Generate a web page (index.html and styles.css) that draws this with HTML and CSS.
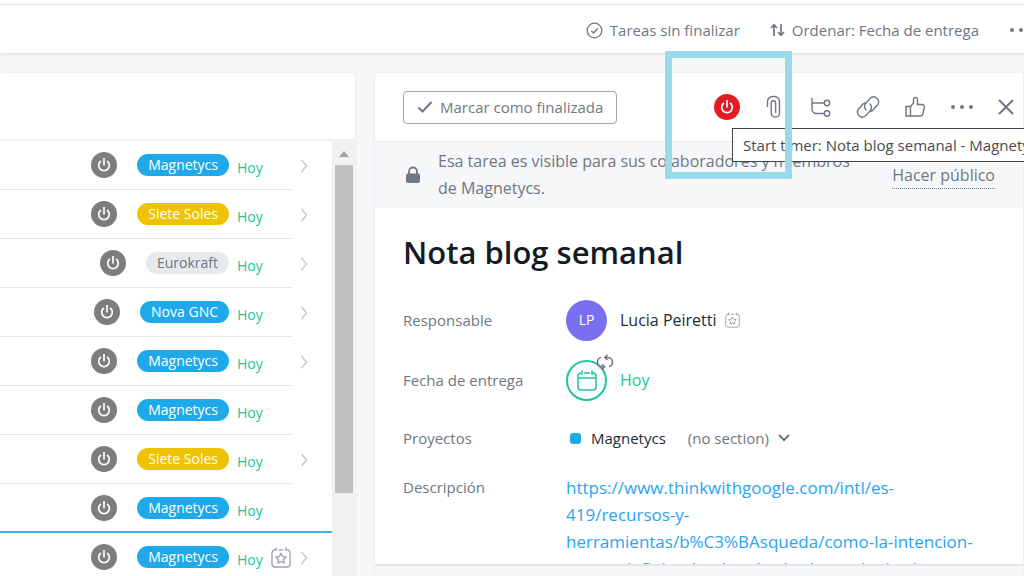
FILE: index.html
```html
<!DOCTYPE html>
<html lang="es">
<head>
<meta charset="utf-8">
<title>Nota blog semanal</title>
<link rel="stylesheet" href="styles.css">
</head>
<body>
<svg class="sprite" aria-hidden="true">
  <symbol id="power" viewBox="0 0 26 26"><path d="M10 9a5.300 5.300 0 1 0 6 0M13 6v7.500" fill="none" stroke="currentColor" stroke-width="1.700"/></symbol>
  <symbol id="chevron" viewBox="0 0 8 14"><path d="M1.500 1l5 6-5 6" fill="none" stroke="currentColor" stroke-width="1.500"/></symbol>
  <symbol id="calstar" viewBox="0 0 20 21"><g fill="none" stroke="currentColor" stroke-width="1.300"><path d="M5 2.800H4a3 3 0 0 0-3 3V17a3 3 0 0 0 3 3h12a3 3 0 0 0 3-3V5.800a3 3 0 0 0-3-3h-1M7.500 2.800h5M5 0.500v3.500M15 0.500v3.500"/><path d="M10 6.500l1.600 3 3.400.6-2.400 2.400.5 3.400L10 14.400l-3.100 1.500.5-3.400L5 10.100l3.400-.6z"/></g></symbol>
</svg>
<div class="app">
  <header class="toolbar">
    <button class="tool"><svg width="17" height="17" viewBox="0 0 17 17"><g fill="none" stroke="currentColor" stroke-width="1.300"><circle cx="8.500" cy="8.500" r="7.300"/><path d="M5.200 8.600l2.400 2.400 4.300-4.700"/></g></svg>Tareas sin finalizar</button>
    <button class="tool"><svg width="15" height="14" viewBox="0 0 15 14"><g fill="none" stroke="currentColor" stroke-width="1.700"><path d="M4 13V2M1 5l3-3.300L7 5M11 1v11M8 9l3 3.300L14 9"/></g></svg>Ordenar: Fecha de entrega</button>
    <button class="tool" aria-label="Más"><svg width="24" height="6" viewBox="0 0 24 6" fill="currentColor"><circle cx="3" cy="3" r="2"/><circle cx="12" cy="3" r="2"/><circle cx="21" cy="3" r="2"/></svg></button>
  </header>
  <main class="board">
    <section class="panel list">
      <div class="list-head"></div>
      <div class="list-body">
        <ul class="rows">
          <li class="row"><div class="row-main"><button class="power" aria-label="Iniciar"><svg><use href="#power"/></svg></button><span class="pill">Magnetycs</span><span class="date">Hoy</span><span class="slot"></span></div><button class="go" aria-label="Abrir"><svg><use href="#chevron"/></svg></button></li>
          <li class="row"><div class="row-main"><button class="power" aria-label="Iniciar"><svg><use href="#power"/></svg></button><span class="pill pill-yellow">Siete Soles</span><span class="date">Hoy</span><span class="slot"></span></div><button class="go" aria-label="Abrir"><svg><use href="#chevron"/></svg></button></li>
          <li class="row"><div class="row-main"><button class="power" aria-label="Iniciar"><svg><use href="#power"/></svg></button><span class="pill pill-gray">Eurokraft</span><span class="date">Hoy</span><span class="slot"></span></div><button class="go" aria-label="Abrir"><svg><use href="#chevron"/></svg></button></li>
          <li class="row"><div class="row-main"><button class="power" aria-label="Iniciar"><svg><use href="#power"/></svg></button><span class="pill">Nova GNC</span><span class="date">Hoy</span><span class="slot"></span></div><button class="go" aria-label="Abrir"><svg><use href="#chevron"/></svg></button></li>
          <li class="row"><div class="row-main"><button class="power" aria-label="Iniciar"><svg><use href="#power"/></svg></button><span class="pill">Magnetycs</span><span class="date">Hoy</span><span class="slot"></span></div><button class="go" aria-label="Abrir"><svg><use href="#chevron"/></svg></button></li>
          <li class="row"><div class="row-main"><button class="power" aria-label="Iniciar"><svg><use href="#power"/></svg></button><span class="pill">Magnetycs</span><span class="date">Hoy</span><span class="slot"></span></div></li>
          <li class="row"><div class="row-main"><button class="power" aria-label="Iniciar"><svg><use href="#power"/></svg></button><span class="pill pill-yellow">Siete Soles</span><span class="date">Hoy</span><span class="slot"></span></div><button class="go" aria-label="Abrir"><svg><use href="#chevron"/></svg></button></li>
          <li class="row row-marked"><div class="row-main"><button class="power" aria-label="Iniciar"><svg><use href="#power"/></svg></button><span class="pill">Magnetycs</span><span class="date">Hoy</span><span class="slot"></span></div></li>
          <li class="row"><div class="row-main"><button class="power" aria-label="Iniciar"><svg><use href="#power"/></svg></button><span class="pill">Magnetycs</span><span class="date">Hoy</span><span class="slot"><svg class="calstar"><use href="#calstar"/></svg></span></div><button class="go" aria-label="Abrir"><svg><use href="#chevron"/></svg></button></li>
        </ul>
        <div class="scrollbar"><span class="arrow"></span><span class="thumb"></span></div>
      </div>
    </section>
    <section class="panel detail">
      <div class="detail-head">
        <button class="complete"><svg width="16" height="12" viewBox="0 0 16 12"><path d="M1.500 6.500l4 4L14.500 1" fill="none" stroke="currentColor" stroke-width="2"/></svg>Marcar como finalizada</button>
        <div class="actions">
          <div class="timer">
            <button class="power power-on" aria-label="Start timer" aria-describedby="tip"><svg><use href="#power"/></svg></button>
            <div class="tooltip" id="tip" role="tooltip">Start timer: Nota blog semanal - Magnetycs</div>
            <div class="highlight"></div>
          </div>
          <button class="action" aria-label="Adjuntar"><svg width="16" height="24" viewBox="0 0 16 24"><path d="M1.500 12V6.500a5 5 0 0 1 5-5h2a5 5 0 0 1 5 5V18a4 4 0 0 1-8.300 0V8a2.200 2.200 0 0 1 4.400 0v10"/></svg></button>
          <button class="action" aria-label="Subtareas"><svg width="22" height="22" viewBox="0 0 22 22"><path d="M2 2v11a4.500 4.500 0 0 0 4.500 4.500H14M2 7h12"/><circle cx="17" cy="7" r="2.700"/><circle cx="17" cy="17.500" r="2.700"/></svg></button>
          <button class="action" aria-label="Copiar enlace"><svg width="24" height="24" viewBox="0 0 24 24"><path d="M10.500 15.500a5 5 0 0 1-.5-7.500l4.500-5a5 5 0 0 1 7 7l-4.500 5a4.500 4.500 0 0 1-3.500 1.300M13.500 8.500a5 5 0 0 1 .5 7.500l-4.500 5a5 5 0 0 1-7-7L7 9a4.500 4.500 0 0 1 3.500-1.300"/></svg></button>
          <button class="action" aria-label="Me gusta"><svg width="22" height="22" viewBox="0 0 22 22"><path d="M2 10.500h4.500V20H2zM6.500 10.500L9.500 7V3.500a2 2 0 0 1 4 0V8.500h4.500a2.300 2.300 0 0 1 2.300 2.800l-1.500 6.900a2.300 2.300 0 0 1-2.300 1.800H6.500"/></svg></button>
          <button class="action" aria-label="Más acciones"><svg width="24" height="6" viewBox="0 0 24 6"><g class="solid"><circle cx="3" cy="3" r="2"/><circle cx="12" cy="3" r="2"/><circle cx="21" cy="3" r="2"/></g></svg></button>
          <button class="action action-close" aria-label="Cerrar"><svg width="18" height="18" viewBox="0 0 18 18"><path d="M2 2l14 14M16 2L2 16" stroke-width="2"/></svg></button>
        </div>
      </div>
      <div class="banner">
        <svg class="lock" width="16" height="18" viewBox="0 0 16 18"><path d="M4 8V5.500a4 4 0 0 1 8 0V8" fill="none" stroke="currentColor" stroke-width="1.800"/><rect x="1" y="7.500" width="14" height="9.500" rx="2" fill="currentColor"/></svg>
        <p class="notice">Esa tarea es visible para sus colaboradores y miembros de Magnetycs.</p>
        <a class="public" href="#">Hacer público</a>
      </div>
      <div class="detail-body">
        <h1 class="title">Nota blog semanal</h1>
        <dl class="fields">
          <dt>Responsable</dt>
          <dd><span class="avatar">LP</span><span class="name">Lucia Peiretti</span><svg class="calstar-small"><use href="#calstar"/></svg></dd>
          <dt>Fecha de entrega</dt>
          <dd><span class="due-icon"><svg width="20" height="21" viewBox="0 0 20 21"><path d="M3.500 3H4a3 3 0 0 0-3 3v11a3 3 0 0 0 3 3h12a3 3 0 0 0 3-3V6a3 3 0 0 0-3-3h-.5M7 3h6M5 0.500V5M15 .500V5M1 8h18" fill="none" stroke="currentColor" stroke-width="1.500"/></svg><svg class="repeat" width="18" height="16" viewBox="0 0 18 16"><path d="M7 12.800H6A4.800 4.800 0 0 1 5 3.400M10 3.400h2a4.800 4.800 0 0 1 1 9.400M11.500 .8L8.800 3.400l2.700 2.600M6 10.200l2.700 2.600L6 15.400" fill="none" stroke="currentColor" stroke-width="1.500"/></svg></span><span class="due">Hoy</span></dd>
          <dt>Proyectos</dt>
          <dd><span class="dot"></span><span class="project">Magnetycs</span><button class="section">(no section)<svg width="12" height="8" viewBox="0 0 12 8"><path d="M1 1l5 5 5-5" fill="none" stroke="currentColor" stroke-width="2"/></svg></button></dd>
          <dt class="text">Descripción</dt>
          <dd class="text"><a class="url" href="#">https://www.thinkwithgoogle.com/intl/es-419/recursos-y-herramientas/b%C3%BAsqueda/como-la-intencion-esta-redefiniendo-el-embudo-de-marketing/</a></dd>
        </dl>
      </div>
      <footer class="detail-foot"></footer>
    </section>
  </main>
</div>
</body>
</html>
```
FILE: styles.css
```css
* { box-sizing: border-box; }
body {
  margin: 0;
  font: 15px/20px "Open Sans", "Noto Sans", sans-serif;
  color: #6f7782;
  background: #f6f7f9;
}
button {
  font: inherit;
  color: inherit;
  background: none;
  border: 0;
  padding: 0;
}
ul, dl, dd, p, h1 { margin: 0; padding: 0; }
a { color: inherit; text-decoration: none; }
.sprite { display: none; }
.app {
  display: flex;
  flex-direction: column;
  height: 100vh;
  overflow: hidden;
}
.toolbar {
  display: flex;
  flex: none;
  justify-content: flex-end;
  align-items: center;
  gap: 30px;
  height: 49px;
  margin: 4px -9px 20px 0;
  padding-top: 2px;
  background: #fff;
  border-top: 1px solid #e0e6e8;
  box-shadow: 0 1px 3px #d5dadf, 0 -4px #fff;
}
.tool { display: flex; align-items: center; gap: 7px; }
.board { display: flex; gap: 20px; flex: 1; min-height: 0; }
.panel {
  display: flex;
  flex-direction: column;
  background: #fff;
  border-radius: 4px 4px 0 0;
  box-shadow: 0 0 3px #dde2e7;
}

.list { flex: 0 0 355px; }
.list-head { flex: none; height: 68px; border-bottom: 2px solid #eff0f2; }
.list-body { display: flex; flex: 1; min-height: 0; overflow: hidden; }
.rows { flex: 1; list-style: none; }
.row { display: flex; height: 49px; }
.row-main {
  display: flex;
  flex: 1;
  align-items: center;
  justify-content: flex-end;
  margin-right: 40px;
  border-bottom: 1px solid #e4e9ec;
}
.row-main:not(:last-child) { margin-right: 0; }
.row-marked { border-bottom: 2px solid #41b5f0; }
.row-marked .row-main { border: 0; }
.power {
  display: block;
  flex: none;
  width: 26px;
  height: 26px;
  border-radius: 50%;
  background: #7d7d7d;
  color: #fff;
}
.power svg { display: block; width: 26px; height: 26px; }
.pill {
  margin: 0 8px 0 20px;
  padding: 0 11px;
  line-height: 22px;
  font-size: 14px;
  border-radius: 11px;
  background: #20a9ea;
  color: #fff;
}
.pill-yellow { background: #eec300; }
.pill-gray { background: #e6eaed; color: #6f7782; }
.date { width: 27px; padding-top: 6px; font-size: 14px; color: #1fc39c; }
.slot { width: 28px; padding-left: 7px; }
.calstar { display: block; width: 20px; height: 21px; color: #98a2ae; }
.go { width: 40px; padding-left: 8px; text-align: left; color: #c4cbd3; }
.go svg { display: block; width: 8px; height: 14px; }

.scrollbar { width: 23px; padding-top: 10px; background: #f1f1f1; }
.arrow {
  display: block;
  width: 0;
  margin: 0 auto 8px;
  border: 5px solid transparent;
  border-top: 0;
  border-bottom: 6px solid #a0a0a0;
}
.thumb { display: block; height: 328px; margin: 0 2px 0 3px; background: #c0c0c0; }

.detail { flex: 1; min-width: 0; margin-right: 1px; }
.detail-head {
  display: flex;
  flex: none;
  justify-content: space-between;
  align-items: center;
  height: 69px;
  padding-left: 28px;
  border-bottom: 1px solid #e8ebee;
}
.complete {
  display: flex;
  align-items: center;
  gap: 7px;
  height: 33px;
  padding: 0 13px;
  border: 1px solid #9ba4b0;
  border-radius: 4px;
}
.actions { display: flex; align-items: center; }
.timer { position: relative; margin-right: 10px; }
.power-on { background: #e31b23; }
.tooltip {
  position: absolute;
  z-index: 1;
  left: 18px;
  top: 34px;
  padding: 6px 10px;
  border: 1px solid #444;
  background: #fff;
  color: #4b4b4f;
  font-size: 15px;
  white-space: nowrap;
}
.highlight {
  position: absolute;
  z-index: 2;
  left: -49px;
  top: -43px;
  width: 127px;
  height: 128px;
  border: 7px solid #9ad9e9;
  pointer-events: none;
}
.action { display: flex; justify-content: center; width: 47px; }
.action svg { fill: none; stroke: currentColor; stroke-width: 1.4; }
.action .solid { fill: currentColor; stroke: none; }
.action-close { width: 38px; padding-left: 4px; }
.banner {
  display: flex;
  flex: none;
  align-items: center;
  padding: 6px 28px 6px 30px;
  background: #f6f7f9;
  font-size: 16px;
}
.lock { flex: none; margin-right: 17px; }
.notice { flex: 1; max-width: 430px; line-height: 27px; }
.public { margin-left: auto; border-bottom: 1px dotted #6f7782; line-height: 26px; }
.detail-body { flex: 1; min-height: 0; overflow: hidden; padding: 24px 28px 0; }
.title { font-size: 31px; line-height: 40px; font-weight: 600; color: #151b26; }
.fields {
  display: grid;
  grid-template-columns: 163px 1fr;
  grid-template-rows: 60px 60px 56px auto;
  align-items: center;
  margin-top: 18px;
}
.fields dd { display: flex; align-items: center; font-size: 16px; }
.avatar, .due-icon {
  display: grid;
  place-items: center;
  width: 41px;
  height: 41px;
  margin-right: 13px;
  border-radius: 50%;
}
.avatar { background: #7a6ff0; color: #fff; font-size: 14px; }
.due-icon { position: relative; border: 2px solid #1fc39c; color: #1fc39c; }
.repeat { position: absolute; right: -9px; top: -8px; color: #6f7782; }
.name, .project { color: #222b37; }
.calstar-small { width: 15px; height: 16px; margin-left: 8px; color: #98a2ae; }
.due { color: #1fc39c; }
.dot { width: 11px; height: 11px; margin: 0 10px 0 4px; border-radius: 3px; background: #20a9ea; }
.project { font-size: 15px; }
.section { display: flex; align-items: center; gap: 9px; margin-left: 22px; font-size: 15px; }
.fields .text { align-self: start; padding-top: 8px; line-height: 27px; }
.url { max-width: 410px; font-size: 17px; color: #2ba4ef; }
.detail-foot { flex: none; height: 12px; background: #f6f7f9; border-top: 2px solid #e4e7ea; }
```
